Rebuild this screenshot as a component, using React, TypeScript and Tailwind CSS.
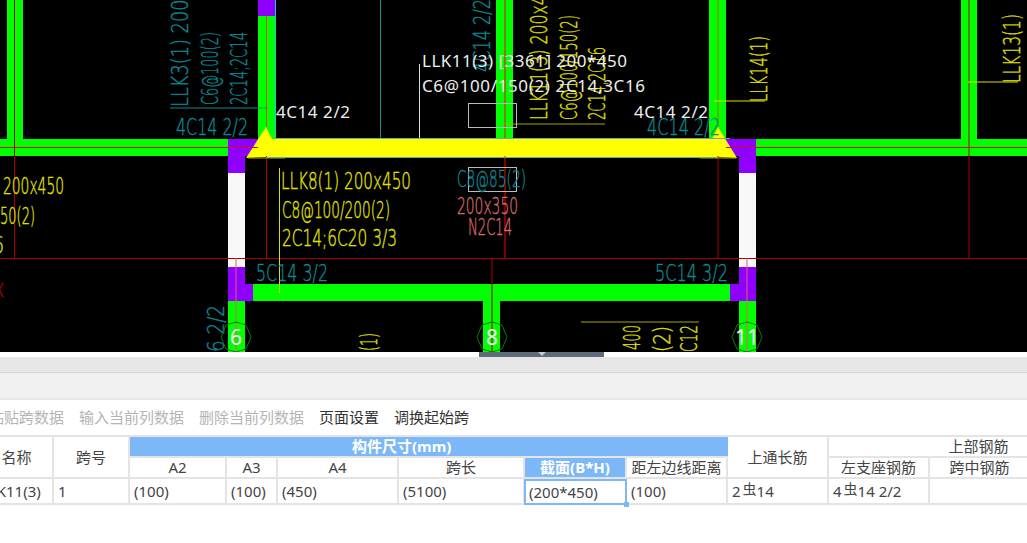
import React from 'react'

const TEAL = '#0b8a94'
const YELLOW = '#e0e000'
const PINK = '#d86a6a'
const WHITE = '#eeeeee'
const GREEN = '#00ff00'
const PURPLE = '#8f00ff'
const RED = '#a80000'

type Label = { t: string; x: number; y: number; w: number; c: string; s?: number; r?: boolean }

// r = text read bottom to top, x/y is the start of the baseline
const labels: Label[] = [
  { t: 'LLK3(1) 200x450', x: 188, y: 107, w: 152, c: TEAL, r: true },
  { t: 'C6@100(2)', x: 218, y: 105, w: 73, c: TEAL, r: true },
  { t: '2C14;2C14', x: 247, y: 105, w: 73, c: TEAL, r: true },
  { t: '4C14 2/2', x: 176, y: 135, w: 72, c: TEAL },
  { t: '4C14 2/2', x: 490, y: 72, w: 73, c: TEAL, r: true },
  { t: '4C14 2/2', x: 647, y: 135, w: 73, c: TEAL },
  { t: 'LLK11(3) 200x400', x: 547, y: 120, w: 145, c: YELLOW, r: true },
  { t: 'C6@100/150(2)', x: 577, y: 120, w: 105, c: YELLOW, r: true },
  { t: '2C14;2C16', x: 605, y: 120, w: 73, c: YELLOW, r: true },
  { t: 'LLK14(1)', x: 767, y: 102, w: 66, c: YELLOW, r: true },
  { t: 'LLK13(1)', x: 1020, y: 83, w: 69, c: YELLOW, r: true },
  { t: '200x450', x: 3, y: 194, w: 61, c: YELLOW },
  { t: '50(2)', x: 0, y: 224, w: 35, c: YELLOW },
  { t: '6', x: -7, y: 253, w: 11, c: YELLOW },
  { t: 'LLK8(1) 200x450', x: 281, y: 189, w: 130, c: YELLOW },
  { t: 'C8@100/200(2)', x: 282, y: 218, w: 108, c: YELLOW },
  { t: '2C14;6C20 3/3', x: 282, y: 246, w: 115, c: YELLOW },
  { t: '5C14 3/2', x: 256, y: 281, w: 72, c: TEAL },
  { t: '5C14 3/2', x: 655, y: 281, w: 73, c: TEAL },
  { t: 'C8@85(2)', x: 457, y: 187, w: 69, c: TEAL },
  { t: '200x350', x: 457, y: 214, w: 61, c: PINK },
  { t: 'N2C14', x: 468, y: 235, w: 44, c: PINK },
  { t: 'X', x: -6, y: 297, w: 10, c: '#c00000', s: 20 },
  { t: '6 2/2', x: 224, y: 352, w: 47, c: TEAL, r: true },
  { t: '(1)', x: 377, y: 351, w: 18, c: YELLOW, r: true },
  { t: '400', x: 640, y: 350, w: 25, c: YELLOW, r: true },
  { t: '(2)', x: 670, y: 352, w: 26, c: YELLOW, r: true },
  { t: 'C12', x: 697, y: 352, w: 27, c: YELLOW, r: true },
]

const rects = [
  // green walls
  [7, 0, 16, 139, GREEN],
  [258, 0, 17, 139, GREEN],
  [496, 0, 17, 139, GREEN],
  [709, 0, 17, 139, GREEN],
  [961, 0, 16, 139, GREEN],
  [0, 139, 228, 17, GREEN],
  [756, 139, 271, 17, GREEN],
  [253, 284, 477, 17, GREEN],
  [228, 301, 17, 51, GREEN],
  [483, 301, 17, 51, GREEN],
  [739, 301, 17, 51, GREEN],
  // purple columns
  [258, 0, 17, 16, PURPLE],
  [228, 139, 30, 17, PURPLE],
  [228, 156, 17, 17, PURPLE],
  [726, 139, 30, 17, PURPLE],
  [739, 156, 17, 17, PURPLE],
  [228, 267, 17, 34, PURPLE],
  [245, 284, 8, 17, PURPLE],
  [739, 267, 17, 34, PURPLE],
  [730, 284, 9, 17, PURPLE],
  // white walls
  [228, 173, 17, 94, '#f8f8f8'],
  [739, 173, 17, 94, '#f8f8f8'],
] as const

const lines = [
  // axis lines
  [14.5, 0, 14.5, 258, RED],
  [266.5, 16, 266.5, 127, '#c0561a'],
  [266.5, 156, 266.5, 258, RED],
  [505, 0, 505, 139, '#ff0000'],
  [505, 156, 505, 258, '#ff0000'],
  [718, 0, 718, 127, '#b06a10'],
  [718, 156, 718, 258, RED],
  [969, 0, 969, 258, RED],
  [0, 147.5, 258, 147.5, '#d01010'],
  [726, 147.5, 1027, 147.5, '#d01010'],
  [0, 258.5, 1027, 258.5, RED],
  [492, 258, 492, 352, RED],
  [236, 258, 236, 352, '#e06060'],
  [747, 258, 747, 352, '#e06060'],
  // leaders
  [275.5, 0, 275.5, 138, '#22c8d0'],
  [275, 138.5, 730, 138.5, '#6aa8ad'],
  [380.5, 0, 380.5, 138, '#0a8f96'],
  [170, 108, 266, 108, TEAL],
  [419.5, 64, 419.5, 138, '#dddddd'],
  [505, 124, 605, 124, '#a8a800'],
  [714, 101, 765, 101, YELLOW],
  [968, 82, 1018, 82, YELLOW],
  [279.5, 168, 279.5, 293, YELLOW],
  [581, 322, 699, 322, '#a8a800'],
  [248, 158, 285, 158, '#a8a800'],
  [700, 158, 736, 158, '#a8a800'],
  [266, 157.5, 718, 157.5, '#6aa8ad'],
] as const

function Drawing() {
  return (
    <svg width="1027" height="352" viewBox="0 0 1027 352" className="block bg-black">
      {rects.map(([x, y, w, h, c], i) => (
        <rect key={i} x={x} y={y} width={w} height={h} fill={c} />
      ))}
      <path d="M266 127 L246 158 L266 157 L718 157 L737 158 L718 127 L712 139 L272 139 Z" fill="#ffff00" />
      {lines.map(([x1, y1, x2, y2, c], i) => (
        <line key={i} x1={x1} y1={y1} x2={x2} y2={y2} stroke={c} strokeWidth="1" />
      ))}
      <rect x="468.5" y="103.5" width="48" height="24" fill="none" stroke="#bbbbbb" />
      <rect x="468.5" y="167.5" width="48" height="24" fill="none" stroke="#bbbbbb" />
      {labels.map((l, i) => (
        <text
          key={i}
          x={l.x}
          y={l.y}
          fill={l.c}
          stroke={l.c}
          strokeWidth="0.4"
          fontSize={l.s ?? 23}
          fontWeight="200"
          textLength={l.w}
          lengthAdjust="spacingAndGlyphs"
          fontFamily="'DejaVu Sans', sans-serif"
          transform={l.r ? `rotate(-90 ${l.x} ${l.y})` : undefined}
        >
          {l.t}
        </text>
      ))}
      <text x="276" y="118" fill={WHITE} fontSize="17" fontFamily="'Noto Sans', sans-serif" textLength="74">4C14 2/2</text>
      <text x="634" y="118" fill={WHITE} fontSize="17" fontFamily="'Noto Sans', sans-serif" textLength="74">4C14 2/2</text>
      <text x="422" y="67" fill={WHITE} fontSize="17" fontFamily="'Noto Sans', sans-serif" textLength="205">LLK11(3) [3361] 200*450</text>
      <text x="422" y="92" fill={WHITE} fontSize="17" fontFamily="'Noto Sans', sans-serif" textLength="223">C6@100/150(2) 2C14,3C16</text>
      {[
        [236, '6'],
        [492, '8'],
        [747, '11'],
      ].map(([x, t]) => (
        <g key={t}>
          <path
            transform={`translate(${x} 337)`}
            d="M-15 0 L-10 -12 L0 -15 L10 -12 L15 0 L10 12 L0 15 L-10 12 Z"
            fill="none"
            stroke="#067a06"
          />
          <text x={x} y="345" fill="#f4f4f4" fontSize="21" textAnchor="middle" fontFamily="'Noto Sans', sans-serif">
            {t}
          </text>
        </g>
      ))}
    </svg>
  )
}

function Rebar({ n, rest }: { n: string; rest: string }) {
  return (
    <>
      {n}
      <span className="relative -top-[2px] ml-[2px] text-[14px]">虫</span>
      {rest}
    </>
  )
}

const cell = 'flex items-center border-r-2 border-b-2 border-[#e4e4e4] min-w-0 whitespace-nowrap'
const head = cell + ' justify-center'
const data = cell + ' pl-[4px]'
const blue = 'bg-[#7cb8f8] text-white font-bold'

export default function App() {
  return (
    <div
      className="w-[1027px] h-[543px] overflow-hidden bg-white text-[15px] text-[#444]"
      style={{ fontFamily: "'Noto Sans', 'Noto Sans CJK SC', sans-serif" }}
    >
      <Drawing />
      <div className="flex justify-start h-[5px] bg-white">
        <div className="ml-[479px] w-[125px] flex justify-center bg-[#5f6b78]">
          <div className="w-0 h-0 border-x-[4px] border-x-transparent border-t-[4px] border-t-[#c4c8cc]" />
        </div>
      </div>
      <div className="h-[16px] bg-[#e6e6e6] border-b border-[#d6d6d6]" />
      <div className="h-[27px] bg-[#f0f0f0] border-b-2 border-[#e6e6e6]" />
      <div className="h-[35px] flex items-center gap-[15px] -ml-[11px] leading-none text-[#b4b4b4]">
        <span>粘贴跨数据</span>
        <span>输入当前列数据</span>
        <span>删除当前列数据</span>
        <span className="text-[#333]">页面设置</span>
        <span className="text-[#333]">调换起始跨</span>
      </div>
      <div className="w-[1148px] -ml-[19px] border-t-2 border-[#e4e4e4] grid grid-cols-[73px_76px_97px_51px_121px_126px_102px_101px_101px_101px_101px_99px] grid-rows-[21px_21px_26px] leading-none">
        <div className={head + ' row-span-2'}>名称</div>
        <div className={head + ' row-span-2'}>跨号</div>
        <div className={'col-span-6 flex items-center pl-[222px] border-b-2 border-[#e4e4e4] whitespace-nowrap ' + blue}>构件尺寸(mm)</div>
        <div className={head + ' row-span-2'}>上通长筋</div>
        <div className={head + ' col-span-3'}>上部钢筋</div>
        <div className={head}>A2</div>
        <div className={head}>A3</div>
        <div className={head}>A4</div>
        <div className={head}>跨长</div>
        <div className={head + ' ' + blue}>截面(B*H)</div>
        <div className={head}>距左边线距离</div>
        <div className={head}>左支座钢筋</div>
        <div className={head}>跨中钢筋</div>
        <div className={head} />
        <div className={cell + ' pl-0'}>LLK11(3)</div>
        <div className={data}>1</div>
        <div className={data}>(100)</div>
        <div className={data}>(100)</div>
        <div className={data}>(450)</div>
        <div className={data}>(5100)</div>
        <div className="relative -ml-px flex items-center pl-[3px] border-2 border-[#7cb8f8] whitespace-nowrap">
          (200*450)
          <span className="absolute -right-[4px] -bottom-[4px] w-[5px] h-[5px] bg-[#7cb8f8]" />
        </div>
        <div className={data}>(100)</div>
        <div className={data}><Rebar n="2" rest="14" /></div>
        <div className={data}><Rebar n="4" rest="14 2/2" /></div>
        <div className={data} />
        <div className={data} />
      </div>
    </div>
  )
}
